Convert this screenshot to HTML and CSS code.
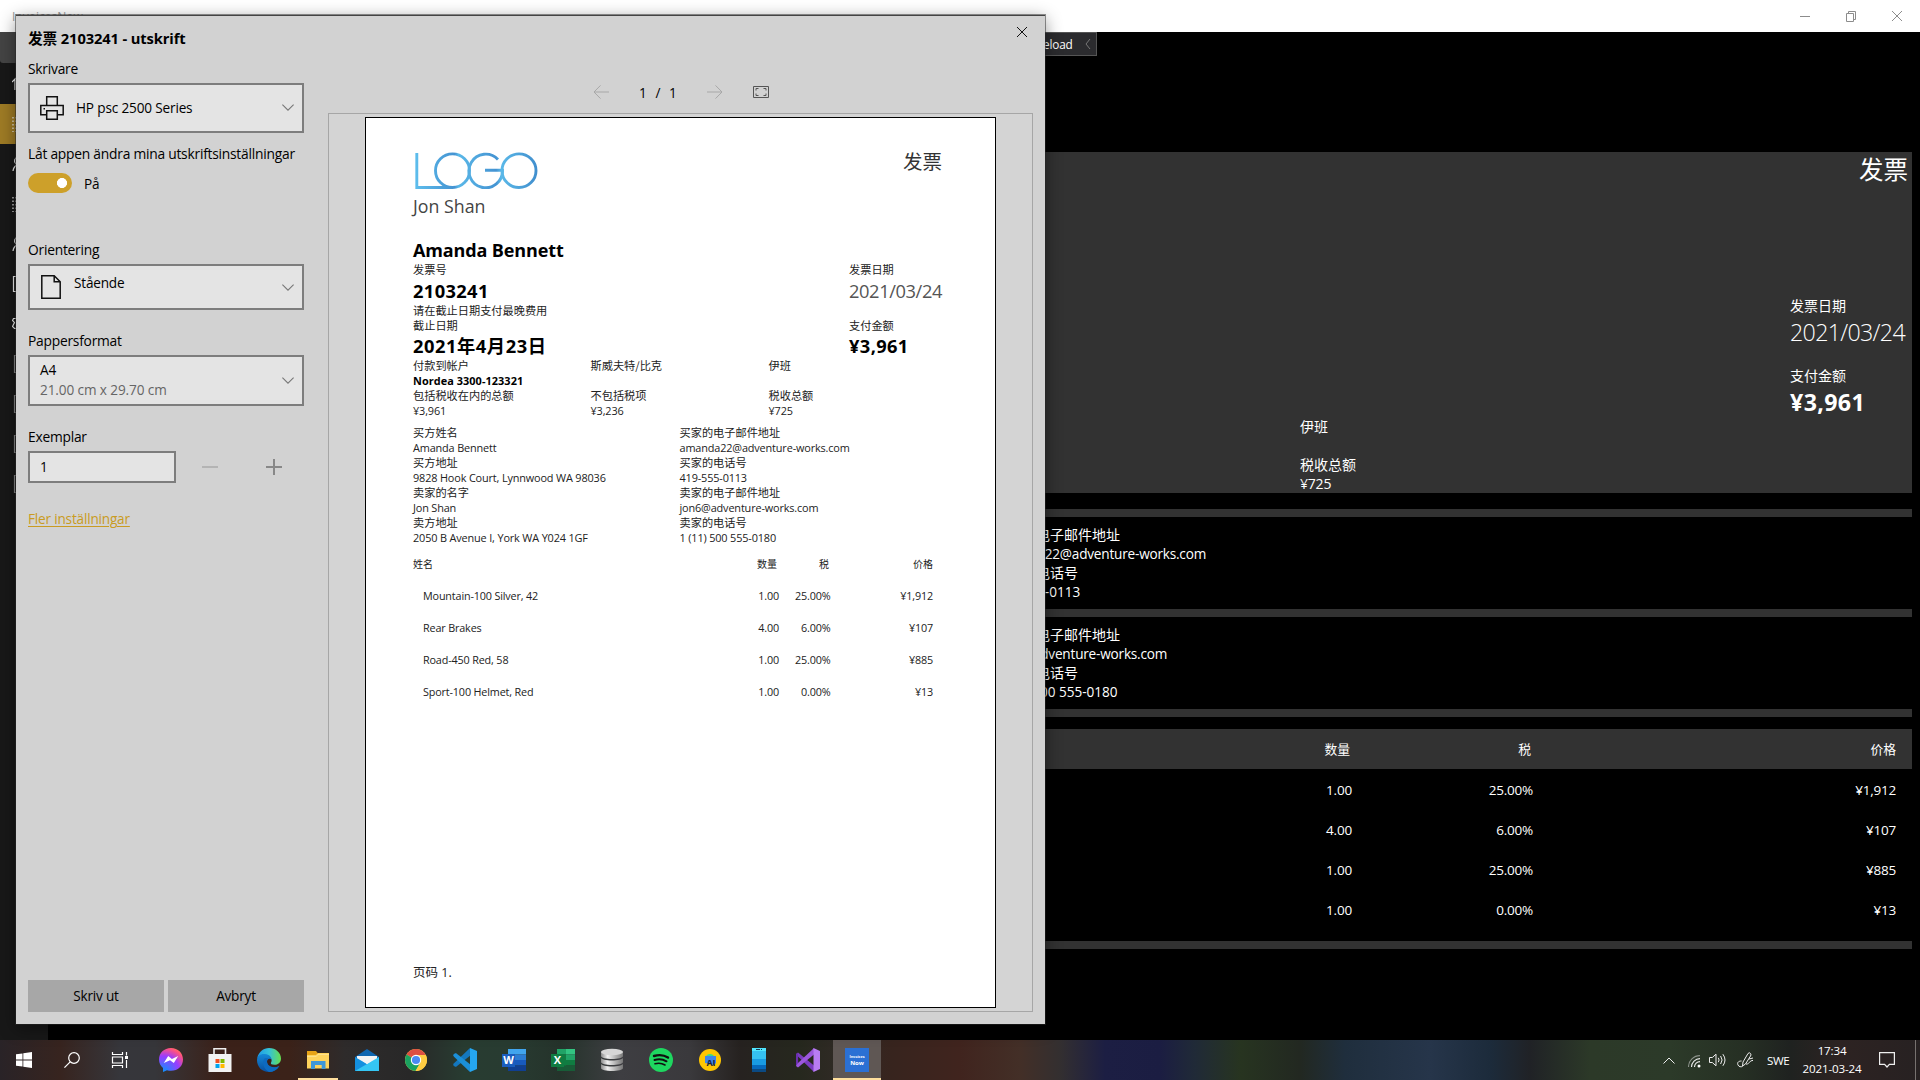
FILE: index.html
```html
<!DOCTYPE html>
<html lang="sv">
<head>
<meta charset="utf-8">
<title>InvoicesNow</title>
<link rel="stylesheet" href="styles.css">
</head>
<body>
<div class="desktop">
  <header class="titlebar">
    <span class="app-name">InvoicesNow</span>
    <div class="win-buttons">
      <svg width="46" height="32" viewBox="0 0 46 32"><path d="M18 16.5h10"/></svg>
      <svg width="46" height="32" viewBox="0 0 46 32"><path d="M18.5 13.500h7v8h-7zM20.500 13.500v-2h7v8h-2"/></svg>
      <svg width="46" height="32" viewBox="0 0 46 32"><path d="M18 11l10 10M28 11L18 21"/></svg>
    </div>
  </header>

  <div class="app">
    <nav class="sidebar">
      <div class="nav-item menu"></div>
      <div class="nav-item"><svg width="16" height="16" viewBox="0 0 16 16"><path d="M0 6l3-3V14M3 3l5-3 8 7"/></svg></div>
      <div class="nav-item active"><svg width="16" height="16" viewBox="0 0 16 16"><path class="dots" d="M1 1v15M4 1v15M7 3h9M7 8h9M7 13h9"/></svg></div>
      <div class="nav-item"><svg width="16" height="16" viewBox="0 0 16 16"><path d="M1 15c.5-4 2-5 4-6M6 1a4 4 0 0 0-2 7"/></svg></div>
      <div class="nav-item"><svg width="16" height="16" viewBox="0 0 16 16"><path class="dots" d="M1 1v15M4 1v15M7 3h9"/></svg></div>
      <div class="nav-item"><svg width="16" height="16" viewBox="0 0 16 16"><path d="M1 15c.5-4 2-5 4-6M6 1a4 4 0 0 0-2 7"/></svg></div>
      <div class="nav-item"><svg width="16" height="16" viewBox="0 0 16 16"><path d="M1.500 .5h12v15h-12z"/></svg></div>
      <div class="nav-item"><svg width="16" height="16" viewBox="0 0 16 16"><path d="M4 2.500H1.500l-1 2 2 2-1 2-1 2 2 2H4"/></svg></div>
      <div class="nav-item dim"><svg width="16" height="18" viewBox="0 0 16 18"><path d="M2.500 .5h12v17h-12z"/></svg></div>
      <div class="nav-item dim"><svg width="16" height="18" viewBox="0 0 16 18"><path d="M2.500 .5h12v17h-12z"/></svg></div>
      <div class="nav-item dim"><svg width="16" height="18" viewBox="0 0 16 18"><path d="M2.500 .5h12v17h-12z"/></svg></div>
      <div class="nav-item dim"><svg width="16" height="18" viewBox="0 0 16 18"><path d="M2.500 .5h12v17h-12z"/></svg></div>
    </nav>
    <main class="content">
      <div class="debug-row">
        <div class="debug-bar"><span>Reload</span><svg width="6" height="12" viewBox="0 0 6 12"><path d="M5 1L1 6l4 5"/></svg></div>
      </div>
      <section class="summary">
        <div class="summary-title zh">发票</div>
        <div class="summary-dates">
          <p class="zh">发票日期</p>
          <p class="big light">2021/03/24</p>
          <p class="zh">支付金额</p>
          <p class="big bold">¥3,961</p>
        </div>
        <div class="summary-tax">
          <p class="zh">伊班</p>
          <p class="gap"></p>
          <p class="zh">税收总额</p>
          <p class="tax-sum">¥725</p>
        </div>
      </section>
      <section class="party">
        <p class="zh">买家的电子邮件地址</p>
        <p>amanda22@adventure-works.com</p>
        <p class="zh">买家的电话号</p>
        <p class="phone">419-555-0113</p>
      </section>
      <section class="party">
        <p class="zh">卖家的电子邮件地址</p>
        <p>jon6@adventure-works.com</p>
        <p class="zh">卖家的电话号</p>
        <p class="phone">1 (11) 500 555-0180</p>
      </section>
      <div class="bar"></div>
      <section class="items">
        <div class="item head zh"><span>数量</span><span>税</span><span>价格</span></div>
        <div class="item"><span>1.00</span><span>25.00%</span><span>¥1,912</span></div>
        <div class="item"><span>4.00</span><span>6.00%</span><span>¥107</span></div>
        <div class="item"><span>1.00</span><span>25.00%</span><span>¥885</span></div>
        <div class="item"><span>1.00</span><span>0.00%</span><span>¥13</span></div>
      </section>
      <div class="bar last"></div>
    </main>
  </div>

  <footer class="taskbar">
    <div class="system">
      <div class="task"><svg width="16" height="16" viewBox="0 0 16 16"><path fill="#fff" d="M0 2.300L6.500 1.400v6.200H0zM7.300 1.300L16 0v7.600H7.300zM0 8.400h6.500v6.200L0 13.700zM7.300 8.400H16V16l-8.700-1.300z"/></svg></div>
      <div class="task"><svg width="16" height="16" viewBox="0 0 16 16"><g fill="none" stroke="#fff" stroke-width="1.200"><circle cx="10" cy="6" r="5.300"/><path d="M6.200 9.800L.4 15.600"/></g></svg></div>
      <div class="task"><svg width="18" height="16" viewBox="0 0 18 16"><g fill="none" stroke="#fff" stroke-width="1.200"><path d="M1.500 0v2.500h10V0M1.500 16v-2.500h10V16M1.500 5h10v6h-10zM15.500 0v3.500M15.500 8v8"/></g><path fill="#fff" d="M14 4h3v3h-3z"/></svg></div>
    </div>
    <div class="apps">
      <div class="task"><svg width="24" height="24" viewBox="0 0 24 24"><defs><radialGradient id="ms" cx=".2" cy="1" r="1.100"><stop offset="0" stop-color="#0a94ff"/><stop offset=".6" stop-color="#9a3cff"/><stop offset=".9" stop-color="#ff5280"/><stop offset="1" stop-color="#ff7061"/></radialGradient></defs><path fill="url(#ms)" d="M12 0C5 0 0 5 0 11.500c0 3.500 1.500 6.500 4 8.500v4l4-1.800c1.200.4 2.600.6 4 .6 7 0 12-4.800 12-11.300S19 0 12 0z"/><path fill="#fff" d="M4.800 15l4.400-7 3.700 3 6.300-3-4.400 7-3.800-2.800z"/></svg></div>
      <div class="task"><svg width="24" height="24" viewBox="0 0 24 24"><path fill="none" stroke="#eee" stroke-width="1.600" d="M6 7V.8h11.500V7"/><path fill="#f2f2f2" d="M.5 6h23v18H.5z"/><path fill="#f25022" d="M7.500 11h4v4h-4z"/><path fill="#7fba00" d="M12.500 11h4v4h-4z"/><path fill="#00a4ef" d="M7.500 16h4v4h-4z"/><path fill="#ffb900" d="M12.500 16h4v4h-4z"/></svg></div>
      <div class="task"><svg width="24" height="24" viewBox="0 0 24 24"><defs><linearGradient id="e1"><stop offset="0" stop-color="#1c9be8"/><stop offset=".5" stop-color="#35c1d8"/><stop offset="1" stop-color="#66e04f"/></linearGradient><linearGradient id="e2" x2="0" y2="1"><stop offset="0" stop-color="#1488d8"/><stop offset="1" stop-color="#0a4f9e"/></linearGradient></defs><path fill="url(#e1)" d="M.3 10C1.500 4 6.500 0 12 0c7 0 12 5 12 10.500 0 4-3 6.300-6.500 6.300-3 0-4-1-3.500-2 1.500-2.500.5-6.300-4-6.800C6 7.500 2 8 .3 10z"/><path fill="url(#e2)" d="M0 12c0-4.500 4-6.500 8-6 4.500.4 6.500 3 6.500 6-1-2-4.500-1.500-4.500 1.500 0 5 6 8 12.300 4.500C20 22 16 24 12 24 5 24 0 19 0 12z"/><path fill="#0d6ac0" d="M7 11c-2 5 0 10 5 13 4 0 8-2 10.300-6C16 21 10 18 10 13.500c0-1.500.8-2.500 2-2.800-2-1-4-1-5 .3z"/></svg></div>
      <div class="task running"><svg width="24" height="24" viewBox="0 0 24 24"><path fill="#e8a317" d="M1 3h9l2 2.500V9H1z"/><path fill="#ffd35c" d="M1 7h9l2-2h11v15.500H1z"/><path fill="#3f97d8" d="M5 21v-8h14.500v8h-3.800v-4H9v4z"/><path fill="#ffe08a" d="M1 8h9l2-2h11v1H12l-2 2H1z"/></svg></div>
      <div class="task"><svg width="24" height="24" viewBox="0 0 24 24"><path fill="#0f66b0" d="M0 9l12-8 12 8v4H0z"/><path fill="#f3f3f3" d="M2 8h20v5l-10 5L2 13z"/><path fill="#1490df" d="M0 9v14h24z"/><path fill="#35c6f4" d="M24 9v14H0z"/><path fill="#f3f3f3" d="M1.500 8.500h21L12 16z"/></svg></div>
      <div class="task"><svg width="22" height="22" viewBox="0 0 22 22"><circle cx="11" cy="11" r="11" fill="#ffcd42"/><path fill="#dd4f43" d="M11 11L1.500 5.500a11 11 0 0 1 19 0z"/><path fill="#1aa260" d="M1.500 5.500A11 11 0 0 0 10.500 22l5-8.500L11 11z"/><path fill="#ffcd42" d="M11 6h9.800A11 11 0 0 1 10.500 22l5-8.500z"/><circle cx="11" cy="11" r="5.200" fill="#fff"/><circle cx="11" cy="11" r="4.100" fill="#4a8af4"/></svg></div>
      <div class="task"><svg width="24" height="24" viewBox="0 0 24 24"><path fill="#1477bd" d="M17 0L1 15.300 0 17l2 1.700h1.200L18 7z"/><path fill="#1b8fd8" d="M17 24L1 8.700 0 7l2-1.700h1.200L18 17z"/><path fill="#25a6f0" d="M17 0l7 3v18l-7 3z"/></svg></div>
      <div class="task"><svg width="24" height="22" viewBox="0 0 24 22"><path fill="#41a5ee" d="M6 0h18v5.500H6z"/><path fill="#2b7cd3" d="M6 5.500h18V11H6z"/><path fill="#185abd" d="M6 11h18v5.500H6z"/><path fill="#103f91" d="M6 16.500h18V22H6z"/><path fill="#1a5dbe" d="M0 5h13v13H0z"/><text class="glyph" x="6.500" y="15.300">W</text></svg></div>
      <div class="task"><svg width="24" height="22" viewBox="0 0 24 22"><path fill="#21a366" d="M6 0h9v5.500H6z"/><path fill="#33c481" d="M15 0h9v5.500h-9z"/><path fill="#107c41" d="M6 5.500h9V22H6z"/><path fill="#21a366" d="M15 5.500h9V11h-9z"/><path fill="#107c41" d="M15 11h9v5.500h-9z"/><path fill="#185c37" d="M6 16.500h18V22H6z"/><path fill="#107c41" d="M0 5h13v13H0z"/><text class="glyph" x="6.500" y="15.300">X</text></svg></div>
      <div class="task"><svg width="22" height="24" viewBox="0 0 22 24"><defs><linearGradient id="db"><stop offset="0" stop-color="#8a8a8a"/><stop offset=".3" stop-color="#f0f0f0"/><stop offset="1" stop-color="#777"/></linearGradient></defs><g fill="url(#db)"><path d="M0 15.500v4.500c0 4 22 4 22 0v-4.500c0 4-22 4-22 0z"/><path d="M0 9.500v4.500c0 4 22 4 22 0V9.500c0 4-22 4-22 0z"/><path d="M0 3.500V8c0 4 22 4 22 0V3.500z"/></g><ellipse cx="11" cy="4" rx="11" ry="3.300" fill="#d6d6d6"/></svg></div>
      <div class="task"><svg width="24" height="24" viewBox="0 0 24 24"><circle cx="12" cy="12" r="12" fill="#1ed760"/><g fill="none" stroke="#101010" stroke-linecap="round"><path stroke-width="2.400" d="M5 8c5-1.500 10-1 14 1.500"/><path stroke-width="2" d="M5.500 12c4-1.200 8.500-.8 12 1.300"/><path stroke-width="1.600" d="M6 15.800c3.500-1 7-.6 10 1.200"/></g></svg></div>
      <div class="task"><svg width="22" height="22" viewBox="0 0 22 22"><circle cx="11" cy="11" r="11" fill="#fec601"/><path fill="#3ddc84" d="M7 8c0-4 8-4 8 0z"/><path fill="#3f86e8" d="M6 7h11v7l-2 2-9-2z"/><text class="glyph dark" x="12" y="17">AI</text></svg></div>
      <div class="task"><svg width="14" height="24" viewBox="0 0 14 24"><path fill="#50e6ff" d="M0 0h14v4H0z"/><path fill="#35c1f1" d="M0 3h14v9H0z"/><path fill="#199be2" d="M0 11h14v6H0z"/><path fill="#0669bc" d="M0 17h14v5H0z"/><path fill="#0b4a82" d="M0 21h14v3H0z"/><path fill="#173a55" d="M4 1h4v1H4zM9 1h1v1H9z"/></svg></div>
      <div class="task"><svg width="24" height="24" viewBox="0 0 24 24"><path fill="#7a3cc0" d="M0 6l2-1.500 16 13V24L2 8.500V6z"/><path fill="#6b2fb0" d="M0 6l2-1 .3 12.500L0 18z"/><path fill="#9b57dc" d="M0 18l2 1.500L18 6.500V0L2 15z"/><path fill="#b87cf3" d="M17.500 0L24 3v18l-6.500 3z"/></svg></div>
      <div class="task running current"><div class="tile"><span>Invoices</span><b>Now</b></div></div>
    </div>
    <div class="tray">
      <svg class="t-chev" width="12" height="7" viewBox="0 0 12 7"><path d="M.5 6.500L6 1l5.500 5.500"/></svg>
      <svg class="t-wifi" width="13" height="13" viewBox="0 0 13 13"><g stroke-width="1.100"><path opacity=".5" d="M.5 12A11.500 11.500 0 0 1 12 .6"/><path d="M3.500 12A8.500 8.500 0 0 1 12 3.600M6.500 12A5.500 5.500 0 0 1 12 6.600"/></g><circle cx="11" cy="11" r="1.500" fill="#fff" stroke="none"/></svg>
      <svg class="t-vol" width="17" height="14" viewBox="0 0 17 14"><path d="M.5 4.500h2.800L7 1.200v11.600L3.300 9.500H.5zM9.300 4.800q1.600 2.200 0 4.400M11.600 3q3 4 0 8M13.900 1.200q4.200 5.800 0 11.600"/></svg>
      <svg class="t-pen" width="17" height="17" viewBox="0 0 17 17"><path d="M6 10l5-8.500q1.500-1.500 2.500 0t0 2.500L8.500 12 5.500 14zM4.500 9C1 9 0 11 1 13s3 2 4.500 1.500M9 12c2.500 1 4-4 7-3.500M12 7l4-1"/></svg>
      <span class="t-lang">SWE</span>
      <div class="clock"><span>17:34</span><span>2021-03-24</span></div>
      <svg class="t-note" width="16" height="16" viewBox="0 0 16 16"><path d="M.6.6h14.800v11.800h-5L8 15l-2.400-2.600h-5z"/></svg>
      <div class="show-desktop"></div>
    </div>
  </footer>

  <div class="dialog">
    <aside class="options">
      <h1>发票 2103241 - utskrift</h1>
      <label class="lb-printer">Skrivare</label>
      <div class="combo printer">
        <svg width="24" height="24" viewBox="0 0 24 24"><g fill="none" stroke="#111" stroke-width="1.500"><path d="M6.700 9.500V.8h10.600v8.700M6.500 18.700H.8V9.500h22.400v9.200h-5.500M6.700 14.800h10.600v8.400H6.700z"/></g><path fill="#111" d="M3.500 12h1.500v1.500H3.500z"/></svg>
        <span>HP psc 2500 Series</span>
        <svg class="chev" width="12" height="7" viewBox="0 0 12 7"><path d="M.4.6L6 6.200 11.600.6"/></svg>
      </div>
      <label class="lb-toggle">Låt appen ändra mina utskriftsinställningar</label>
      <div class="toggle-row"><div class="toggle"></div><span>På</span></div>
      <label class="lb-orient">Orientering</label>
      <div class="combo orient">
        <svg width="20" height="24" viewBox="0 0 20 24"><g fill="none" stroke="#111" stroke-width="1.500"><path d="M.8.800h12.400l6 6v16.400H.8zM13.200.8v6h6"/></g></svg>
        <span>Stående</span>
        <svg class="chev" width="12" height="7" viewBox="0 0 12 7"><path d="M.4.6L6 6.200 11.600.6"/></svg>
      </div>
      <label class="lb-paper">Pappersformat</label>
      <div class="combo paper">
        <div class="paper-text"><span>A4</span><span class="muted">21.00 cm x 29.70 cm</span></div>
        <svg class="chev" width="12" height="7" viewBox="0 0 12 7"><path d="M.4.6L6 6.200 11.600.6"/></svg>
      </div>
      <label class="lb-copies">Exemplar</label>
      <div class="copies">
        <div class="field">1</div>
        <svg class="minus" width="16" height="16" viewBox="0 0 16 16"><path d="M0 8h16"/></svg>
        <svg class="plus" width="16" height="16" viewBox="0 0 16 16"><path d="M0 8h16M8 0v16"/></svg>
      </div>
      <a class="more">Fler inställningar</a>
      <div class="actions"><div class="btn">Skriv ut</div><div class="btn">Avbryt</div></div>
    </aside>

    <section class="preview">
      <div class="preview-bar">
        <svg class="arrow" width="16" height="14" viewBox="0 0 16 14"><path d="M16 7H1M7.500.4L1 7l6.500 6.600"/></svg>
        <span>1 / 1</span>
        <svg class="arrow" width="16" height="14" viewBox="0 0 16 14"><path d="M0 7h15M8.500.4L15 7l-6.500 6.600"/></svg>
        <svg class="fit" width="16" height="12" viewBox="0 0 16 12"><path d="M.5.5h15v11H.5zM3 4.500v-2h2.500M10.500 2.500H13v2M13 7.500v2h-2.500M5.500 9.500H3v-2"/></svg>
      </div>
      <div class="canvas">
        <article class="sheet">
          <header class="sheet-head">
            <svg class="logo" width="126" height="37" viewBox="0 0 126 37"><defs><linearGradient id="lg" gradientUnits="userSpaceOnUse" x1="0" y1="0" x2="126" y2="0"><stop offset="0" stop-color="#5fc0ee"/><stop offset=".33" stop-color="#4493d2"/><stop offset=".36" stop-color="#5ab8e8"/><stop offset=".66" stop-color="#4493d2"/><stop offset=".7" stop-color="#5ab8e8"/><stop offset="1" stop-color="#3f8ccc"/></linearGradient></defs><g fill="none" stroke="url(#lg)" stroke-width="2.900"><path d="M3.800 1v34.500H40"/><ellipse cx="39.500" cy="18.700" rx="17" ry="16.800"/><path d="M85 7.500A16.800 16.800 0 1 0 89.500 18.200H72"/><ellipse cx="106" cy="18.700" rx="17" ry="16.800"/></g></svg>
            <div class="sheet-kind zh">发票</div>
          </header>
          <p class="seller">Jon Shan</p>
          <p class="buyer">Amanda Bennett</p>
          <div class="facts">
            <div>
              <p class="zh h16">发票号</p>
              <p class="strong h25">2103241</p>
              <p class="zh">请在截止日期支付最晚费用</p>
              <p class="zh">截止日期</p>
              <p class="strong due h26">2021年4月23日</p>
            </div>
            <div>
              <p class="zh h16">发票日期</p>
              <p class="thin h25">2021/03/24</p>
              <p class="zh">&nbsp;</p>
              <p class="zh">支付金额</p>
              <p class="strong h26">¥3,961</p>
            </div>
          </div>
          <div class="payment">
            <p class="zh">付款到帐户</p><p class="zh">斯威夫特/比克</p><p class="zh">伊班</p>
            <p class="acct">Nordea 3300-123321</p><p></p><p></p>
            <p class="zh">包括税收在内的总额</p><p class="zh">不包括税项</p><p class="zh">税收总额</p>
            <p>¥3,961</p><p>¥3,236</p><p>¥725</p>
          </div>
          <div class="people">
            <p class="zh">买方姓名</p><p class="zh">买家的电子邮件地址</p>
            <p>Amanda Bennett</p><p>amanda22@adventure-works.com</p>
            <p class="zh">买方地址</p><p class="zh">买家的电话号</p>
            <p>9828 Hook Court, Lynnwood WA 98036</p><p>419-555-0113</p>
            <p class="zh">卖家的名字</p><p class="zh">卖家的电子邮件地址</p>
            <p>Jon Shan</p><p>jon6@adventure-works.com</p>
            <p class="zh">卖方地址</p><p class="zh">卖家的电话号</p>
            <p>2050 B Avenue I, York WA Y024 1GF</p><p>1 (11) 500 555-0180</p>
          </div>
          <div class="lines">
            <div class="line head zh"><span>姓名</span><span>数量</span><span>税</span><span>价格</span></div>
            <div class="line"><span>Mountain-100 Silver, 42</span><span>1.00</span><span>25.00%</span><span>¥1,912</span></div>
            <div class="line"><span>Rear Brakes</span><span>4.00</span><span>6.00%</span><span>¥107</span></div>
            <div class="line"><span>Road-450 Red, 58</span><span>1.00</span><span>25.00%</span><span>¥885</span></div>
            <div class="line"><span>Sport-100 Helmet, Red</span><span>1.00</span><span>0.00%</span><span>¥13</span></div>
          </div>
          <p class="page-no">页码 1.</p>
        </article>
      </div>
    </section>
    <svg class="close" width="12" height="12" viewBox="0 0 12 12"><path d="M1 1l10 10M11 1L1 11"/></svg>
  </div>
</div>
</body>
</html>
```
FILE: styles.css
```css
* { box-sizing: border-box; }
body {
  margin: 0;
  background: #000;
  color: #fff;
  font-family: "Open Sans", "Noto Sans", "Noto Sans CJK SC", sans-serif;
  font-size: 13.6px;
  letter-spacing: -0.015em;
}
p, h1 { margin: 0; }
svg { display: block; flex: none; }
.zh { font-family: "Noto Sans CJK SC", sans-serif; letter-spacing: 0; }

.desktop {
  position: relative;
  width: 1920px;
  height: 1080px;
  overflow: hidden;
  display: flex;
  flex-direction: column;
}

/* app window */
.titlebar {
  height: 32px;
  background: #fff;
  display: flex;
  justify-content: space-between;
  align-items: center;
}
.app-name { padding-left: 12px; font-size: 12px; color: #999; letter-spacing: 0; }
.win-buttons { display: flex; }
.win-buttons path { fill: none; stroke: #8c8c8c; }

.app { flex: 1; display: flex; min-height: 0; }
.sidebar { width: 48px; background: #181818; }
.nav-item { height: 40px; display: flex; align-items: center; padding-left: 12px; }
.nav-item.menu { height: 31px; margin-bottom: 1px; background: #444; border-radius: 0 0 0 3px; }
.nav-item.active { background: #9e7b25; }
.nav-item path { fill: none; stroke: #eee; stroke-width: 1.2; }
.nav-item .dots { stroke-dasharray: 1.5 2; }
.nav-item.dim path { stroke: #888; }

.content { flex: 1; padding-right: 8px; }
.debug-row { height: 120px; padding-left: 960px; }
.debug-bar {
  width: 89px;
  height: 24px;
  display: flex;
  align-items: center;
  justify-content: space-between;
  padding: 0 5px 1px 27px;
  background: #2b2b2e;
  border: 1px solid #555;
  font-size: 11.8px;
}
.debug-bar path { fill: none; stroke: #777; }

.summary { height: 341px; padding: 0 4px 0 0; background: #323232; font-size: 14px; }
.summary p { height: 19px; line-height: 19px; }
.summary p.zh { line-height: 17px; }
.summary p.tax-sum { line-height: 17px; }
.summary .summary-title { height: 36px; line-height: 33px; font-size: 24.500px; text-align: right; }
.summary-dates { width: 118px; margin: 109px 0 0 auto; }
.summary .summary-dates .big { height: 32px; line-height: 33px; font-size: 23.2px; margin-bottom: 19px; white-space: nowrap; }
.summary .summary-dates .light { font-weight: 350; letter-spacing: -0.029em; }
.summary .summary-dates .bold { font-weight: 700; margin-bottom: 0; letter-spacing: 0.016em; }
.summary-tax { margin: 0 0 0 1252px; }

.bar, .party { border-top: 8px solid #323232; }
.party { height: 100px; padding: 8px 0 0 946px; }
.summary + .party { margin-top: 16px; }
.party p { height: 19px; line-height: 19px; }
.party .zh { font-size: 14px; }
.party .phone { letter-spacing: -0.002em; }
.bar { height: 8px; }
.items { margin-top: 12px; }
.item {
  height: 40px;
  padding-top: 1px;
  display: grid;
  grid-template-columns: 1304px 181px 363px;
  align-items: center;
  text-align: right;
  font-size: 13.5px;
}
.item.head { background: #323232; padding: 0 0 2px; grid-template-columns: 1302px 181px 365px; font-size: 12.800px; }
.bar.last { margin-top: 12px; }

/* taskbar */
.taskbar {
  height: 40px;
  display: flex;
  background: linear-gradient(90deg, #292327 0, #37241f 60px, #36363b 120px, #36363a 155px, #3b2119 220px, #3b2219 290px, #2e2b2b 345px, #282828 410px, #283c31 465px, #283b31 510px, #25332b 560px, #3e3e42 620px, #3a393c 690px, #262220 740px, #26281e 800px, #302a25 840px, #37241e 890px, #40241e 960px, #432f27 1020px, #332f30 1060px, #1c1e43 1105px, #1b1d42 1160px, #202a37 1195px, #273420 1240px, #222821 1300px, #1f2e3d 1345px, #26354a 1430px, #1c2b3b 1490px, #202226 1530px, #2c3928 1590px, #2c3a29 1670px, #263024 1740px, #1f2220 1790px, #2d2322 1840px, #272122 1920px);
}
.system, .apps { display: flex; }
.apps { gap: 1px; padding-left: 3px; }
.task { width: 48px; height: 40px; display: flex; align-items: center; justify-content: center; }
.running { background: linear-gradient(#ffdf9d, #ffdf9d) center bottom / 40px 2px no-repeat; }
.running.current { background: linear-gradient(#ffdf9d, #ffdf9d) center bottom / 48px 2px no-repeat, #5f5754; }
.glyph { font: 700 11px "Open Sans", sans-serif; fill: #fff; text-anchor: middle; letter-spacing: 0; }
.glyph.dark { font-size: 9px; fill: #14213a; }
.tile {
  width: 24px;
  height: 24px;
  background: #2b70d4;
  display: flex;
  flex-direction: column;
  justify-content: center;
  align-items: center;
  line-height: 6px;
  letter-spacing: 0;
}
.tile span { font-size: 3.7px; font-weight: 700; }
.tile b { font-size: 6px; }

.tray { margin-left: auto; display: flex; align-items: center; padding-right: 4px; }
.tray path, .tray g { fill: none; stroke: #eee; }
.t-wifi { margin: 2px 0 0 13px; }
.t-vol { margin-left: 8px; }
.t-pen { margin-left: 11px; }
.t-lang { width: 24px; margin-left: 13px; font-size: 11.6px; letter-spacing: -0.03em; }
.clock { width: 60px; margin-left: 11px; display: flex; flex-direction: column; align-items: center; font-size: 11.6px; line-height: 18px; letter-spacing: -0.015em; }
.t-note { margin-left: 17px; }
.tray .t-note path { stroke-width: 1.2; }
.show-desktop { width: 1px; height: 40px; margin-left: 20px; background: #77716f; }

/* print dialog, floating over the app */
.dialog {
  position: absolute;
  left: 16px;
  top: 15px;
  width: 1029px;
  height: 1009px;
  display: flex;
  background: #d2d2d2;
  border-top: 1px solid #444;
  box-shadow: 0 0 0 1px rgba(40, 40, 40, .5), 0 4px 16px rgba(0, 0, 0, .45);
  color: #000;
}
.options { width: 288px; padding: 12px 0 0 12px; display: flex; flex-direction: column; }
h1 { height: 22px; line-height: 20px; font-size: 14.7px; font-weight: 700; letter-spacing: -0.008em; }
label { display: block; height: 20px; line-height: 20px; font-size: 13.8px; letter-spacing: -0.017em; white-space: nowrap; }
.lb-printer { margin-top: 8px; padding-top: 1px; }
.combo {
  width: 276px;
  display: flex;
  align-items: center;
  background: #e4e4e4;
  border: 2px solid #7d7d7d;
  padding: 0 8px 0 10px;
}
.combo .chev { margin-left: auto; }
.chev path { fill: none; stroke: #777; stroke-width: 1.1; }
.printer { height: 50px; margin-top: 5px; padding-bottom: 1px; }
.printer span { margin: -1px 0 0 12px; letter-spacing: -0.012em; }
.lb-toggle { margin-top: 11px; }
.toggle-row { height: 20px; margin-top: 9px; display: flex; align-items: center; gap: 12px; }
.toggle {
  width: 44px;
  height: 20px;
  border-radius: 10px;
  background: radial-gradient(circle at 34px 10px, #fff 4.700px, #cda02a 5.300px);
}
.lb-orient { margin-top: 46px; padding-top: 1px; }
.orient { height: 46px; margin-top: 5px; padding-left: 11px; }
.orient span { margin: -9px 0 0 13px; }
.lb-paper { margin-top: 21px; }
.paper { height: 51px; margin-top: 4px; }
.paper-text { display: flex; flex-direction: column; line-height: 20px; }
.paper-text span:first-child { margin-top: -1px; }
.muted { color: #666; letter-spacing: -0.008em; }
.lb-copies { margin-top: 21px; }
.copies { height: 32px; margin-top: 4px; display: flex; align-items: center; }
.field { width: 148px; height: 32px; padding-left: 10px; line-height: 27px; background: #e4e4e4; border: 2px solid #7d7d7d; }
.copies path { stroke: #888; stroke-width: 2; }
.minus { margin-left: 26px; }
.copies .minus path { stroke: #b4b4b4; }
.plus { margin-left: 48px; }
.more { margin-top: 26px; line-height: 20px; color: #c99b22; text-decoration: underline; text-underline-offset: 2px; letter-spacing: -0.014em; }
.actions { display: flex; gap: 4px; margin: auto 0 12px; }
.btn { width: 136px; height: 32px; line-height: 32px; background: #a7a7a7; text-align: center; }

.preview { padding: 65px 0 0 24px; }
.preview-bar { height: 22px; margin-bottom: 10px; padding-left: 265px; display: flex; align-items: center; }
.preview-bar path { fill: none; stroke: #a8a8a8; }
.preview-bar .fit path { stroke: #555; }
.preview-bar span { width: 40px; margin: 0 28px 0 30px; word-spacing: 5.500px; white-space: nowrap; }
.preview-bar .fit { margin-left: 30px; }
.canvas { width: 705px; height: 899px; padding: 3px 0 0 36px; border: 1px solid #a6a6a6; background: #d4d4d4; }
.close { position: absolute; right: 17px; top: 10px; }
.close path { fill: none; stroke: #111; }

/* invoice sheet */
.sheet {
  width: 631px;
  height: 891px;
  padding: 34px 0 0 47px;
  background: #fff;
  border: 1px solid #000;
  color: #222;
  font-size: 10.900px;
  letter-spacing: -0.014em;
}
.sheet p { height: 15px; line-height: 15px; white-space: nowrap; }
.sheet .zh { font-size: 11.200px; letter-spacing: 0; }
.sheet-head { display: flex; justify-content: space-between; width: 529px; height: 37px; }
.sheet .sheet-kind { font-size: 19.500px; line-height: 18px; color: #333; }
.sheet .seller { height: 24px; line-height: 24px; margin-top: 5px; font-size: 17.800px; color: #444; letter-spacing: 0; }
.sheet .buyer { height: 22px; line-height: 21px; margin-top: 22px; font-size: 18px; font-weight: 700; color: #000; letter-spacing: -0.007em; }
.facts { display: grid; grid-template-columns: 436px 100px; }
.sheet .h16 { height: 16px; line-height: 15px; }
.sheet .h25 { height: 25px; line-height: 26px; font-size: 18.300px; }
.sheet .h26 { height: 25px; line-height: 25px; font-size: 18.300px; }
.strong { font-weight: 700; color: #000; letter-spacing: 0.02em; }
.due { letter-spacing: 0.03em; }
.thin { color: #555; letter-spacing: -0.022em; }
.payment { display: grid; grid-template-columns: 177.500px 178px 100px; }
.acct { font-weight: 700; color: #000; letter-spacing: 0.006em; }
.people { display: grid; grid-template-columns: 266.500px 200px; grid-auto-rows: 15.100px; margin-top: 6.500px; }
.lines { margin-top: 9.500px; }
.line {
  height: 31.800px;
  display: grid;
  grid-template-columns: 200px 166px 51.500px 102.500px;
  align-items: center;
  text-align: right;
  font-size: 10.800px;
}
.line span:first-child { text-align: left; padding-left: 10px; white-space: nowrap; }
.sheet .line.head { height: 18px; margin-bottom: 7px; grid-template-columns: 200px 164px 52px 104px; font-size: 10px; }
.sheet .line.head span:first-child { padding-left: 0; }
.sheet .page-no { margin-top: 258.500px; font-size: 12.500px; letter-spacing: 0; }
```
